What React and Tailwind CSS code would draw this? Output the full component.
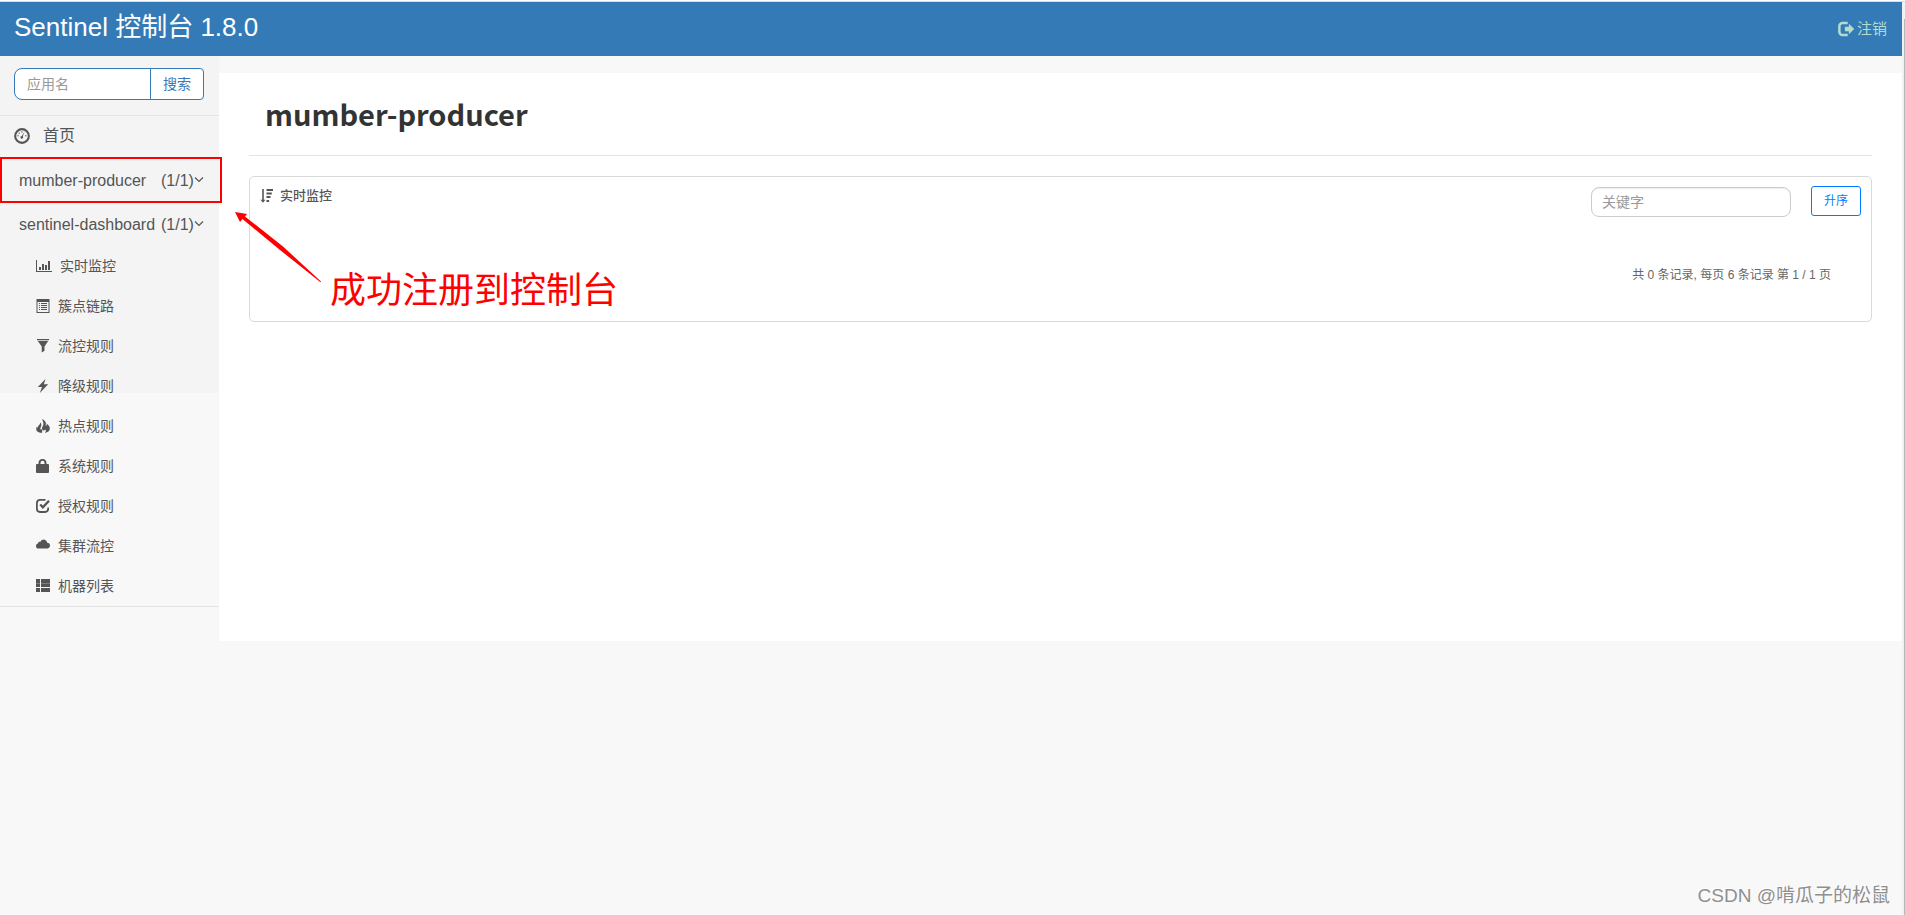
import React from "react";

const Icon = ({ children, size = "size-3.5" }) => (
  <svg viewBox="0 0 14 14" className={`${size} shrink-0`} fill="currentColor" aria-hidden="true">
    {children}
  </svg>
);

const icons = {
  gauge: (
    <Icon size="size-4">
      <path fillRule="evenodd" d="M7 .1a6.900 6.900 0 1 1 0 13.800A6.900 6.900 0 0 1 7 .1Zm0 1.800a5.100 5.100 0 1 0 0 10.200A5.100 5.100 0 0 0 7 1.900Z" />
      <path d="M9.300 3.200 7.700 7.300a1.200 1.200 0 1 1-.9-.4Z" />
      <circle cx="3.500" cy="6.800" r=".6" />
      <circle cx="4.600" cy="4.500" r=".6" />
      <circle cx="7" cy="3.500" r=".6" />
      <circle cx="10.400" cy="6.800" r=".6" />
    </Icon>
  ),
  chart: (
    <svg viewBox="0 0 16 14" className="h-3.5 w-4 shrink-0" fill="currentColor" aria-hidden="true">
      <path d="M0 1h1v11h15v1H0ZM3 8h2v3H3Zm3-3h2v6H6Zm3 1h2v5H9Zm3-4h2v9h-2Z" />
    </svg>
  ),
  list: (
    <Icon>
      <path fillRule="evenodd" d="M.5 0h13v14H.5Zm1 3v10h11V3Z" />
      <path d="M3 4h1v1H3Zm2 0h6v1H5ZM3 6h1v1H3Zm2 0h6v1H5ZM3 8h1v1H3Zm2 0h6v1H5ZM3 10h1v1H3Zm2 0h6v1H5Z" />
    </Icon>
  ),
  filter: (
    <Icon>
      <path d="M1 0h12v1.200H1ZM1.800 2h10.400L8.500 7.500v4.300L5.700 13.500v-6Z" />
    </Icon>
  ),
  flash: (
    <Icon>
      <path d="M9.500 0 1.800 8h4.200L3.800 14 12.200 5.200H7.900Z" />
    </Icon>
  ),
  fire: (
    <Icon>
      <path d="M5.800 0c3.200 1.300 4.700 3.400 4 5.600-.2.900-.1 1.300.3 1.300.6-.2.700-1.100.4-2.300 2.300 1.400 3.500 3.300 3.300 5.400-.2 2-1.800 3.300-4.800 3.900.9-1.200 1.100-2.300.5-3.400-.8 1.100-2.200 1.200-3 .3-.8-1-.6-2.200.2-3.500C8 5.300 7.500 2.500 5.800 0Z" />
      <path d="M4.500 3.300c1.200 1.600 1.100 3 .4 4.400-.7 1.300-.7 2.200-.1 3 .3-.2.500-.5.700-1 .9 1.600 1.200 3.300.1 4.300C2.300 13.600.4 12.300.2 10.200c-.1-.9 0-1.500.3-2.100l1 .9c0-.9.300-1.500 1.200-2.500.9-1 1.700-1.900 1.800-3.200Z" />
    </Icon>
  ),
  lock: (
    <Icon>
      <path fillRule="evenodd" d="M2.500 5V3.800A3.800 3.800 0 0 1 6.500 0a3.800 3.800 0 0 1 4 3.800V5H12q1 0 1 1v7q0 1-1 1H1q-1 0-1-1V6q0-1 1-1Zm2 0h4V3.800a2 2 0 0 0-4 0Z" />
    </Icon>
  ),
  check: (
    <Icon>
      <path d="M9.500.9H4A3.200 3.200 0 0 0 .9 4v5.700A3.300 3.300 0 0 0 4 13h5a3.300 3.300 0 0 0 3.200-3.200V8.600" fill="none" stroke="currentColor" strokeWidth="1.800" />
      <path d="m4.200 5.500 2.700 2.800L13 1.800" fill="none" stroke="currentColor" strokeWidth="2.400" />
    </Icon>
  ),
  cloud: (
    <Icon>
      <path d="M2.800 9.500A2.700 2.700 0 0 1 0 6.900c0-1.300.9-2.300 2-2.500.1-1.200 1.400-1.900 2.200-1.400A3.500 3.500 0 0 1 7.500.5c2 0 3.400 1.300 3.700 3.200A2.900 2.900 0 0 1 14 6.600c0 1.700-1.200 2.900-2.700 2.900Z" />
    </Icon>
  ),
  grid: (
    <Icon>
      <path d="M0 0h4v4H0ZM5 0h9v4H5ZM0 4.300h4V8H0ZM5 4.300h9V8H5ZM0 9h4v4H0ZM5 9h9v4H5Z" />
    </Icon>
  ),
  sort: (
    <Icon>
      <path d="M2.200 0h1.600v10.800h1.600L3 13.800.5 10.800h1.700ZM6.500 0H13v2H6.500ZM6.500 3.500h5.300v2H6.500ZM6.500 7h4v2h-4ZM6.500 11h2.600v2H6.500Z" />
    </Icon>
  ),
  logout: (
    <Icon size="size-4">
      <path d="M8.500 1.800H4A2.700 2.700 0 0 0 1.200 4.500v5A2.700 2.700 0 0 0 4 12.200h4.500" fill="none" stroke="currentColor" strokeWidth="2.200" />
      <path d="M9.500 2.500 14.200 7l-4.700 4.500V9H6V5h3.500Z" />
    </Icon>
  ),
};

const chevron = (
  <svg viewBox="0 0 10 8" className="mb-0.5 h-2 w-2.5 shrink-0" fill="none" stroke="currentColor" aria-hidden="true">
    <path d="m1 1.500 4 4 4-4" strokeWidth="1.200" />
  </svg>
);

const apps = ["mumber-producer", "sentinel-dashboard"];

const menu = [
  ["chart", "实时监控"],
  ["list", "簇点链路"],
  ["filter", "流控规则"],
  ["flash", "降级规则"],
  ["fire", "热点规则"],
  ["lock", "系统规则"],
  ["check", "授权规则"],
  ["cloud", "集群流控"],
  ["grid", "机器列表"],
];

function Header() {
  return (
    <header className="flex h-[54px] items-center justify-between bg-[#337ab7] px-3.5">
      <a href="#home" className="pb-1 text-[26px] leading-8 text-white">
        Sentinel 控制台 1.8.0
      </a>
      <a href="#logout" className="flex items-center gap-[3px] pr-px text-[15px] leading-5 text-[#b3dccb]">
        {icons.logout}
        注销
      </a>
    </header>
  );
}

function Sidebar() {
  return (
    <aside className="w-[219px] shrink-0 bg-[linear-gradient(#f4f4f4_337px,#f8f8f8_337px)] text-[#555]">
      <form className="flex px-3.5 pt-3 pb-[15px]">
        <input
          type="text"
          aria-label="应用名"
          placeholder="应用名"
          className="h-8 w-[137px] rounded-l-[8px] border border-[#337ab7] bg-white px-3 text-sm placeholder:text-[#999]"
        />
        <button type="button" className="-ml-px h-8 w-[54px] rounded-r-[4px] border border-[#337ab7] bg-white text-sm text-[#337ab7]">
          搜索
        </button>
      </form>
      <nav className="border-y border-[#e4e4e4]">
        <a href="#home" className="mb-0.5 flex h-10 items-center gap-[13px] px-3.5 text-base">
          {icons.gauge}
          首页
        </a>
        {apps.map((name) => (
          <a key={name} href={`#${name}`} className="flex h-11 items-center pt-px pl-[19px] text-base">
            <span className="w-[142px]">{name}</span>
            <span>(1/1)</span>
            {chevron}
          </a>
        ))}
        <ul>
          {menu.map(([icon, label]) => (
            <li key={label}>
              <a href={`#${icon}`} className="flex h-10 items-center gap-2 px-9 text-sm">
                {icons[icon]}
                {label}
              </a>
            </li>
          ))}
        </ul>
      </nav>
    </aside>
  );
}

function Monitor() {
  return (
    <section className="h-[146px] rounded-[5px] border border-[#d9d9d9] px-2.5">
      <div className="flex items-start justify-between pt-2">
        <h2 className="flex items-center gap-1.5 pt-px text-[13px] leading-5 font-medium text-[#555]">
          {icons.sort}
          实时监控
        </h2>
        <div className="flex items-center gap-5">
          <input
            type="text"
            aria-label="关键字"
            placeholder="关键字"
            className="mt-0.5 h-[30px] w-[200px] rounded-[8px] border border-[#ccc] bg-white px-2.5 text-sm shadow-[inset_0_1px_1px_rgba(0,0,0,0.075)] placeholder:text-[#999]"
          />
          <button type="button" className="h-[30px] w-[50px] rounded-[3px] border border-[#007bff] bg-white text-xs text-[#007bff]">
            升序
          </button>
        </div>
      </div>
      <p className="pt-12 pr-[30px] text-right text-xs leading-5 text-[#666]">共 0 条记录, 每页 6 条记录 第 1 / 1 页</p>
    </section>
  );
}

function Annotations() {
  return (
    <>
      <div className="absolute top-[156px] left-0 h-[46px] w-[222px] border-2 border-[#f00]" />
      <svg viewBox="0 0 90 74" className="absolute top-[209px] left-[233px] h-[74px] w-[90px]" fill="#f00" aria-hidden="true">
        <path d="M2 2 14 4l-2 2.500L50 36.500l38 35-.5.700L47 40 9.500 9 7 12Z" />
      </svg>
      <p className="absolute top-[264px] left-[330px] text-[36px] leading-[52px] whitespace-nowrap text-[#f00]">成功注册到控制台</p>
      <p className="absolute right-[15px] bottom-[5px] text-[19px] leading-7 whitespace-nowrap text-[#8f8f8f] [text-shadow:-1px_-1px_0_#fff]">
        CSDN @啃瓜子的松鼠
      </p>
    </>
  );
}

export default function App() {
  return (
    <div className="relative flex min-h-screen border-t border-white bg-[#f8f8f8] font-['Liberation_Sans','Noto_Sans_CJK_SC',sans-serif]">
      <div className="min-w-0 flex-1 border-t border-[#ddd]">
        <Header />
        <div className="flex items-start">
          <Sidebar />
          <main className="mt-[17px] min-h-[568px] min-w-0 flex-1 bg-white px-[30px]">
            <h1 className="border-b border-[#e4e4e4] px-4 pt-5 pb-[22px] font-['Noto_Sans_CJK_SC',sans-serif] text-[29px] leading-10 font-bold text-[#333]">
              mumber-producer
            </h1>
            <div className="pt-5">
              <Monitor />
            </div>
          </main>
        </div>
      </div>
      <div className="flex w-[3px] border-t border-[#ddd] bg-[#f1f1f1] pt-[17px]">
        <div className="ml-auto w-px bg-[#b8b8b8]" />
      </div>
      <Annotations />
    </div>
  );
}
